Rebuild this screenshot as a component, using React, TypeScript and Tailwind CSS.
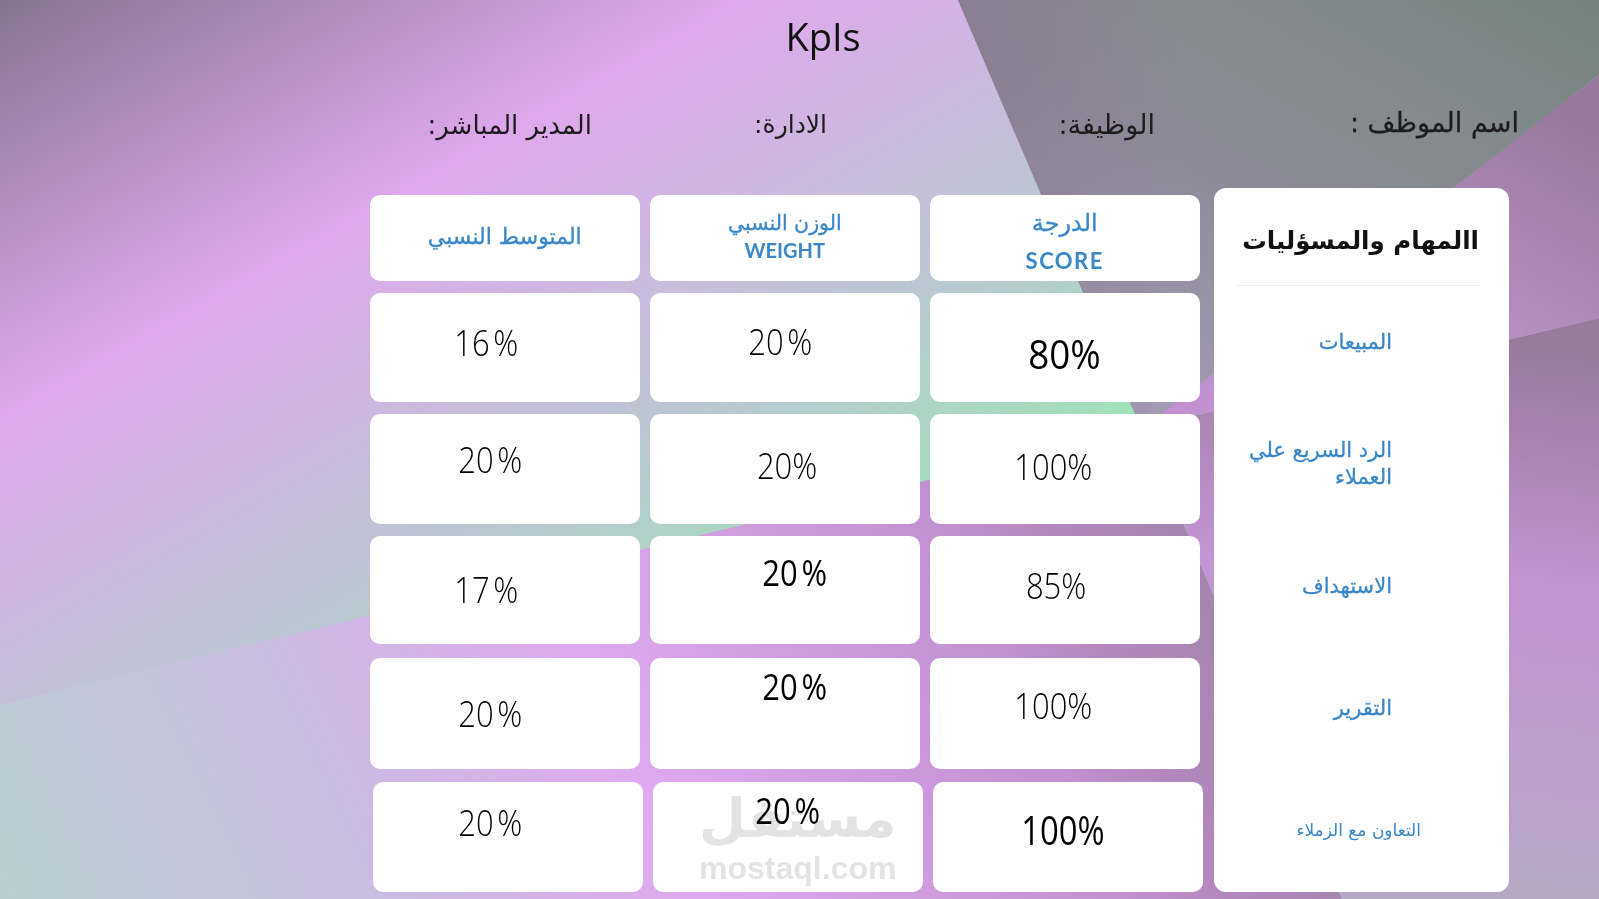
const arabic = "font-['DejaVu_Sans',sans-serif]";
const heavy = "[-webkit-text-stroke:0.3px]";
const plainValue = "scale-x-[0.86] text-[36px] font-light";
const mediumValue = "scale-x-[0.86] text-[36px] font-normal";
const largeValue = "scale-x-[0.92] text-[40px] font-normal";
const largeWideValue = "scale-x-[0.82] text-[40px] font-normal";

function Backdrop() {
  return (
    <svg className="absolute inset-0 h-full w-full" viewBox="0 0 1599 899" preserveAspectRatio="none">
      <defs>
        <linearGradient id="base" gradientUnits="userSpaceOnUse" x1="0" y1="0" x2="492" y2="871">
          <stop offset="0" stopColor="#857490" />
          <stop offset="0.3665" stopColor="#e0a8ee" />
          <stop offset="0.718" stopColor="#b8c9d0" />
          <stop offset="0.905" stopColor="#a2e0ba" />
        </linearGradient>
        <linearGradient id="lower" gradientUnits="userSpaceOnUse" x1="810" y1="-396" x2="-360" y2="176">
          <stop offset="0.047" stopColor="#a385ae" />
          <stop offset="0.149" stopColor="#b387bd" />
          <stop offset="0.215" stopColor="#c090d0" />
          <stop offset="0.513" stopColor="#dfa9ef" />
          <stop offset="0.74" stopColor="#c9bde0" />
          <stop offset="1" stopColor="#b8d0d0" />
        </linearGradient>
        <linearGradient id="corner" gradientUnits="userSpaceOnUse" x1="1599" y1="0" x2="1299" y2="522">
          <stop offset="0" stopColor="#75837d" />
          <stop offset="0.3" stopColor="#838a8c" />
          <stop offset="0.57" stopColor="#8c8a98" />
          <stop offset="1" stopColor="#a69db6" />
        </linearGradient>
        <linearGradient id="cornerEdge" gradientUnits="userSpaceOnUse" x1="958" y1="0" x2="1180" y2="0">
          <stop offset="0" stopColor="#8a7a90" stopOpacity="0.8" />
          <stop offset="1" stopColor="#8a7a90" stopOpacity="0" />
        </linearGradient>
        <linearGradient id="wedge" gradientUnits="userSpaceOnUse" x1="1574" y1="118" x2="1359" y2="493">
          <stop offset="0" stopColor="#98789c" />
          <stop offset="0.49" stopColor="#b48fc0" />
          <stop offset="1" stopColor="#c090d0" />
        </linearGradient>
        <linearGradient id="right" gradientUnits="userSpaceOnUse" x1="1515" y1="345" x2="1455" y2="892">
          <stop offset="0" stopColor="#977a9c" />
          <stop offset="0.44" stopColor="#c394d3" />
          <stop offset="1" stopColor="#b6a9c5" />
        </linearGradient>
      </defs>
      <rect width="1599" height="899" fill="url(#base)" />
      <polygon points="0,705 1143,428 1342,899 0,899" fill="url(#lower)" />
      <polygon points="958,0 1599,0 1599,75 1143,433" fill="url(#corner)" />
      <polygon points="958,0 1180,0 1180,320 1143,433" fill="url(#cornerEdge)" />
      <polygon points="1599,75 1599,318 1143,428" fill="url(#wedge)" />
      <polygon points="1143,428 1599,318 1599,899 1342,899" fill="url(#right)" />
    </svg>
  );
}

function Cell({ className, children }: { className: string; children: React.ReactNode }) {
  return (
    <div className={`flex w-[269.5px] items-center justify-center rounded-[10px] bg-white ${className}`}>{children}</div>
  );
}

function Value({ children, look = plainValue }: { children: string; look?: string }) {
  return (
    <span className={`inline-block font-['Open_Sans',sans-serif] leading-none text-black [word-spacing:-5px] ${look}`}>{children}</span>
  );
}

function Task({ children, className = `text-[21px] ${heavy}` }: { children: React.ReactNode; className?: string }) {
  return (
    <li dir="rtl" className={`flex h-[54px] items-center leading-[27px] text-[#3a87c8] ${arabic} ${className}`}>
      {children}
    </li>
  );
}

export default function App() {
  return (
    <div className="relative h-[899px] w-full overflow-hidden bg-[#c9bde0]">
      <Backdrop />
      <div className="relative flex flex-col">
        <h1 className="flex h-[76px] items-center justify-center pb-[4px] pl-[47px] text-[38px] text-[#111] font-['Open_Sans',sans-serif]">KpIs</h1>

        <div dir="ltr" className={`flex h-[97px] pt-[30px] leading-[38px] text-[#1c1c1c] ${arabic}`}>
          <div dir="rtl" className="w-[592px] text-right text-[26px]">المدير المباشر:</div>
          <div dir="rtl" className="w-[235px] text-right text-[25px]">الادارة:</div>
          <div dir="rtl" className="w-[328px] text-right text-[27px]">الوظيفة:</div>
          <div dir="rtl" className={`-mt-[2px] w-[364px] text-right text-[27px] ${heavy}`}>اسم الموظف :</div>
        </div>

        <div className="mt-[15px] flex items-start pl-[370px]">
          <div className="mt-[7px] flex w-[834px] flex-col">
            <div className="flex gap-[10.5px] text-[#3a87c8]">
              <Cell className="h-[86px] pb-[4px]">
                <span dir="rtl" className={`text-[22px] ${heavy} ${arabic}`}>المتوسط النسبي</span>
              </Cell>
              <Cell className="h-[86px] flex-col pb-[5px]">
                <span dir="rtl" className={`text-[20.5px] leading-[28px] ${heavy} ${arabic}`}>الوزن النسبي</span>
                <span className="font-['Lato',sans-serif] text-[20px] font-bold leading-[26px]">WEIGHT</span>
              </Cell>
              <Cell className="h-[86px] flex-col pt-[6px]">
                <span dir="rtl" className={`text-[24px] leading-[40px] ${heavy} ${arabic}`}>الدرجة</span>
                <span className="font-['Lato',sans-serif] text-[22px] font-bold leading-[36px] tracking-[1.5px]">SCORE</span>
              </Cell>
            </div>

            <div className="mt-[12px] flex gap-[10.5px]">
              <Cell className="h-[109px] pr-[36px] pb-[9px]"><Value>16 %</Value></Cell>
              <Cell className="h-[109px] pr-[9px] pb-[11px]"><Value>20 %</Value></Cell>
              <Cell className="h-[109px] pt-[13px]"><Value look={largeValue}>80%</Value></Cell>
            </div>

            <div className="mt-[12px] flex gap-[10.5px]">
              <Cell className="h-[110px] pr-[29px] pb-[18px]"><Value>20 %</Value></Cell>
              <Cell className="h-[110px] pl-[5px] pb-[6px]"><Value>20%</Value></Cell>
              <Cell className="h-[110px] pr-[23px] pb-[4px]"><Value>100%</Value></Cell>
            </div>

            <div className="mt-[12px] flex gap-[10.5px]">
              <Cell className="h-[108px] pr-[36px]"><Value>17 %</Value></Cell>
              <Cell className="h-[108px] pl-[19px] pb-[34px]"><Value look={mediumValue}>20 %</Value></Cell>
              <Cell className="h-[108px] pr-[17px] pb-[8px]"><Value>85%</Value></Cell>
            </div>

            <div className="mt-[14px] flex gap-[10.5px]">
              <Cell className="h-[111px] pr-[29px]"><Value>20 %</Value></Cell>
              <Cell className="h-[111px] pl-[19px] pb-[53px]"><Value look={mediumValue}>20 %</Value></Cell>
              <Cell className="h-[111px] pr-[23px] pb-[15px]"><Value>100%</Value></Cell>
            </div>

            <div className="mt-[13px] ml-[3px] flex gap-[10.5px]">
              <Cell className="h-[110px] pr-[35px] pb-[28px]"><Value>20 %</Value></Cell>
              <Cell className="relative h-[110px] pb-[52px]">
                <Value look={mediumValue}>20 %</Value>
                <div className="pointer-events-none absolute inset-x-0 top-[3px] flex flex-col items-center pl-[20px] text-[#e3e3e3] mix-blend-multiply">
                  <span dir="rtl" className={`text-[54px] font-bold leading-[68px] ${arabic}`}>مستقل</span>
                  <span className="font-['Liberation_Sans',sans-serif] text-[32px] font-bold leading-[30px]">mostaql.com</span>
                </div>
              </Cell>
              <Cell className="h-[110px] pr-[9px] pb-[14px]"><Value look={largeWideValue}>100%</Value></Cell>
            </div>
          </div>

          <div className="ml-[10px] flex h-[704px] w-[295px] flex-col rounded-[12px] bg-white">
            <div className="ml-[23px] mr-[29px] flex h-[98px] items-center justify-end border-b border-[#eeeeee] pt-[10px] pr-[1px]">
              <span dir="rtl" className={`whitespace-nowrap text-[24.5px] font-bold text-[#111] ${arabic}`}>االمهام والمسؤليات</span>
            </div>
            <ul className="mt-[29px] flex flex-col gap-[68px] pr-[117px]">
              <Task>المبيعات</Task>
              <Task className={`pl-[20px] text-[21px] ${heavy}`}>الرد السريع علي العملاء</Task>
              <Task>الاستهداف</Task>
              <Task>التقرير</Task>
              <Task className="-mr-[29px] text-[17px]">التعاون مع الزملاء</Task>
            </ul>
          </div>
        </div>
      </div>
    </div>
  );
}
